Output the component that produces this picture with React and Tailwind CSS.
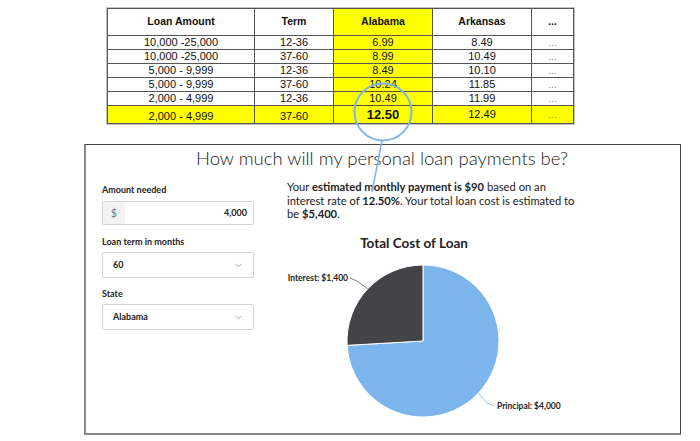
import React from 'react';
import { ChevronDown } from 'lucide-react';

const rows = [
  ['10,000 -25,000', '12-36', '6.99', '8.49'],
  ['10,000 -25,000', '37-60', '8.99', '10.49'],
  ['5,000 - 9,999', '12-36', '8.49', '10.10'],
  ['5,000 - 9,999', '37-60', '10.24', '11.85'],
  ['2,000 - 4,999', '12-36', '10.49', '11.99'],
];

function RateTable() {
  const cell = 'border border-[#555] text-center p-0';
  return (
    <div className="pt-2 pl-[107px]" style={{ fontFamily: '"Liberation Sans", Arial, sans-serif' }}>
      <table className="table-fixed w-[466px] border-collapse outline outline-[#c4c4c4] text-[#111]">
        <colgroup>
          <col className="w-[147px]" />
          <col className="w-[79px]" />
          <col className="w-[99px]" />
          <col className="w-[99px]" />
          <col className="w-[42px]" />
        </colgroup>
        <thead>
          <tr className="h-[27px] text-[10.5px] font-bold">
            <th className={cell}>Loan Amount</th>
            <th className={cell}>Term</th>
            <th className={`${cell} bg-[#ffff00]`}>Alabama</th>
            <th className={cell}>Arkansas</th>
            <th className={cell}>...</th>
          </tr>
        </thead>
        <tbody className="text-[11px] leading-none">
          {rows.map((r, i) => (
            <tr key={i} className="h-[14px]">
              <td className={cell}>{r[0]}</td>
              <td className={cell}>{r[1]}</td>
              <td className={`${cell} bg-[#ffff00]`}>{r[2]}</td>
              <td className={cell}>{r[3]}</td>
              <td className={`${cell} text-[10px] text-[#888]`}>...</td>
            </tr>
          ))}
          <tr className="h-[18px] bg-[#ffff00]">
            <td className={`${cell} pt-[3px]`}>2,000 - 4,999</td>
            <td className={`${cell} pt-[3px]`}>37-60</td>
            <td className={`${cell} text-[13px] font-bold`}>12.50</td>
            <td className={cell}>12.49</td>
            <td className={`${cell} text-[10px] text-[#888]`}>...</td>
          </tr>
        </tbody>
      </table>
    </div>
  );
}

function Select({ value }) {
  return (
    <div className="mt-1 h-[26px] w-[152px] border border-[#d4d4d4] rounded-[2px] flex items-center justify-between pl-[10px] pr-[9px] text-[9px] font-bold text-[#222]">
      <span>{value}</span>
      <ChevronDown size={11} strokeWidth={1.5} className="text-[#888]" />
    </div>
  );
}

function Pie() {
  // center (136, 90), r 76; interest = 1400/5400 of the circle
  return (
    <svg width="300" height="178" viewBox="0 0 300 178" className="block">
      <path d="M136 90 L136 14 A76 76 0 1 1 60.13 94.37 Z" fill="#7cb5ec" stroke="#fff" strokeWidth="1" />
      <path d="M136 90 L136 14 A76 76 0 0 0 60.13 94.37 Z" fill="#434348" stroke="#fff" strokeWidth="1" />
      <path d="M63 27 L70 30 L80.7 37.8" fill="none" stroke="#666" strokeWidth="0.8" />
      <path d="M191.3 142.2 L200 152 L207 155" fill="none" stroke="#7cb5ec" strokeWidth="0.8" />
      <text x="61" y="30" textAnchor="end" fontSize="8.5" fontWeight="700" fill="#222" fontFamily="Lato, sans-serif">Interest: $1,400</text>
      <text x="210" y="158" fontSize="8.5" fontWeight="700" fill="#222" fontFamily="Lato, sans-serif">Principal: $4,000</text>
    </svg>
  );
}

function Calculator() {
  return (
    <div
      className="ml-[84px] mt-[20px] w-[597px] h-[291px] border border-[#444] border-l-2 border-l-[#8a8a8a] border-b-2 border-b-[#8a8a8a] px-4 pt-[2px]"
      style={{ fontFamily: 'Lato, "Open Sans", sans-serif' }}
    >
      <h2 className="text-center text-[18.5px] leading-[22px] font-light text-[#222] ml-[-2px]">
        How much will my personal loan payments be?
      </h2>
      <div className="flex mt-[12px]">
        <div className="w-[152px] pt-[3px]">
          <div className="text-[9px] leading-3 font-bold text-[#222]">Amount needed</div>
          <div className="mt-[5px] h-[24px] flex border border-[#d4d4d4] rounded-[2px] text-[9px] text-[#222]">
            <div className="w-[22px] bg-[#f3f3f3] flex items-center justify-center text-[#777] text-[11px] font-normal">$</div>
            <div className="flex-1 flex items-center justify-end pr-[6px] font-bold">4,000</div>
          </div>
          <div className="mt-[11px] text-[9px] leading-3 font-bold text-[#222]">Loan term in months</div>
          <Select value="60" />
          <div className="mt-[10px] text-[9px] leading-3 font-bold text-[#222]">State</div>
          <Select value="Alabama" />
        </div>
        <div className="ml-[33px] w-[310px]">
          <p className="text-[11.2px] leading-[13.5px] text-[#222] w-[298px] mt-[-1px]">
            Your <b>estimated monthly payment is $90</b> based on an interest rate of <b>12.50%</b>. Your total loan cost is estimated to be <b>$5,400</b>.
          </p>
          <div className="mt-[14px] w-[254px] text-center text-[13.5px] leading-4 font-bold text-[#222]">Total Cost of Loan</div>
          <Pie />
        </div>
      </div>
    </div>
  );
}

export default function App() {
  return (
    <div className="relative w-[700px] h-[441px] bg-white overflow-hidden">
      <RateTable />
      <Calculator />
      {/* highlight callout drawn over the table and calculator */}
      <svg className="absolute left-0 top-0 pointer-events-none" width="700" height="441">
        <circle cx="383" cy="112" r="28.5" fill="none" stroke="#7cb5ec" strokeWidth="2" />
        <line x1="382" y1="140.5" x2="372" y2="192" stroke="#7cb5ec" strokeWidth="1.5" />
      </svg>
    </div>
  );
}
